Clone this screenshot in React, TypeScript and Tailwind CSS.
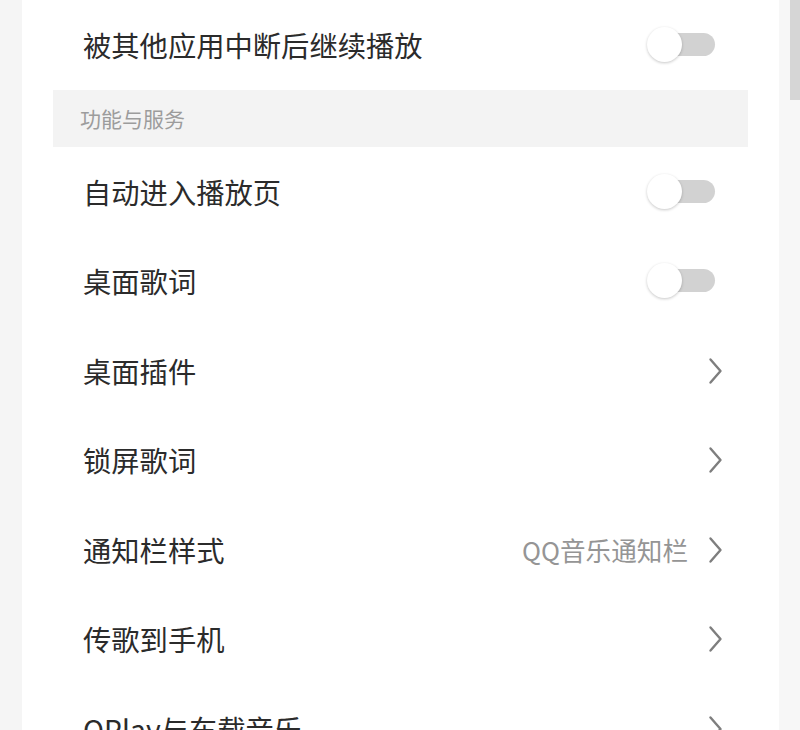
import React from 'react';

type Row =
  | { label: string; kind: 'toggle' }
  | { label: string; kind: 'link'; value?: string };

const rows: Row[] = [
  { label: '自动进入播放页', kind: 'toggle' },
  { label: '桌面歌词', kind: 'toggle' },
  { label: '桌面插件', kind: 'link' },
  { label: '锁屏歌词', kind: 'link' },
  { label: '通知栏样式', kind: 'link', value: 'QQ音乐通知栏' },
  { label: '传歌到手机', kind: 'link' },
  { label: 'QPlay与车载音乐', kind: 'link' },
];

const Toggle = () => (
  <div className="relative w-[68px] h-[36px] mr-[8px]">
    <div className="absolute right-0 top-[6px] w-[56px] h-[23px] rounded-full bg-[#d2d2d2]" />
    <div className="absolute left-0 top-0 w-[35px] h-[35px] rounded-full bg-white shadow-[0_1px_3px_rgba(0,0,0,0.22)]" />
  </div>
);

const Chevron = () => (
  <svg width="15" height="28" viewBox="0 0 15 28" className="shrink-0">
    <path d="M2.5 2.5 L12.5 14 L2.5 25.5" fill="none" stroke="#7e7e7e" strokeWidth="2.4" strokeLinecap="round" strokeLinejoin="round" />
  </svg>
);

const SettingRow = ({ row, first }: { row: Row; first?: boolean }) => (
  <div className={`flex items-center justify-between pl-[61px] pr-[56px] ${first ? 'h-[90px]' : 'h-[89.5px]'}`}>
    <span className="text-[28.3px] text-[#2b2b2b] leading-none whitespace-nowrap">{row.label}</span>
    {row.kind === 'toggle' ? (
      <Toggle />
    ) : (
      <div className="flex items-center gap-[20px]">
        {row.value && <span className="text-[25.6px] text-[#959595] leading-none">{row.value}</span>}
        <Chevron />
      </div>
    )}
  </div>
);

export default function App() {
  return (
    <div
      className="flex w-[800px] h-[730px] overflow-hidden bg-[#f5f5f5]"
      style={{ fontFamily: '"Noto Sans CJK SC", "Noto Sans", sans-serif' }}
    >
      <div className="w-[22px] shrink-0 bg-[#f5f5f5]" />
      <div className="w-[757px] shrink-0 bg-white">
        <SettingRow row={{ label: '被其他应用中断后继续播放', kind: 'toggle' }} first />
        <div className="mx-[31px] h-[57px] bg-[#f3f3f3] flex items-center pl-[27px]">
          <span className="text-[21px] text-[#9c9c9c] leading-none">功能与服务</span>
        </div>
        {rows.map((r) => (
          <SettingRow key={r.label} row={r} />
        ))}
      </div>
      <div className="flex-1 flex justify-end bg-[#f7f7f7]">
        <div className="w-[10px] h-[100px] bg-[#d6d6d6]" />
      </div>
    </div>
  );
}
